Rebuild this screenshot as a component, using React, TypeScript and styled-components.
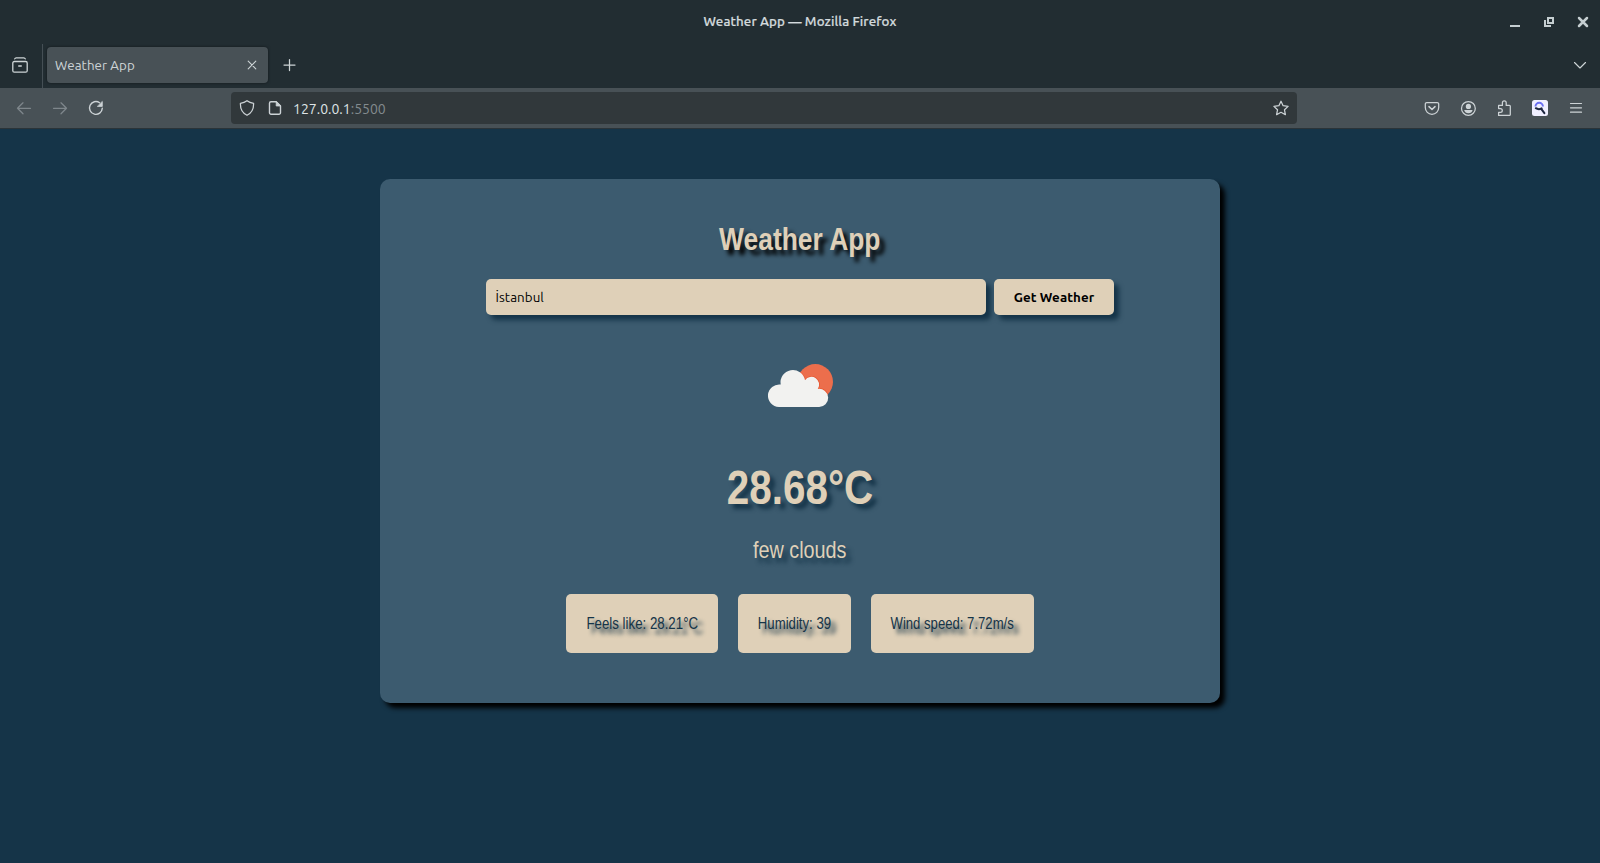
import React from "react";
import styled, { createGlobalStyle } from "styled-components";

const UI_FONT = `Ubuntu, "Noto Sans", sans-serif`;
const PAGE_FONT = `"Liberation Sans", Arial, sans-serif`;
const NAVY = "#153448";
const SLATE = "#3c5b6f";
const SAND = "#dfd0b8";

const GlobalStyle = createGlobalStyle`
  * { box-sizing: border-box; }
  body { margin: 0; background: ${NAVY}; overflow: hidden; }
  h1, h2, p { margin: 0; }
  button, input { font: inherit; color: inherit; border: 0; padding: 0; margin: 0; background: none; outline: 0; }
`;

const Window = styled.div`
  display: flex;
  flex-direction: column;
  width: 1600px;
  height: 863px;
  background: ${NAVY};
  font-family: ${UI_FONT};
`;

const TitleBar = styled.header`
  display: grid;
  grid-template-columns: 1fr auto 1fr;
  align-items: center;
  height: 43px;
  background: #222d32;
  color: #d3dadd;
`;

const WindowTitle = styled.span`
  grid-column: 2;
  font-size: 13.333px;
  line-height: 15px;
  padding-bottom: 1px;
  font-weight: 500;
  letter-spacing: 0.1px;
  -webkit-text-stroke: 0.2px currentColor;
  white-space: nowrap;
`;

const WindowControls = styled.div`
  display: flex;
  justify-content: flex-end;
  gap: 18px;
  padding-right: 9px;
  color: #c5ced1;
`;

const TabStrip = styled.div`
  display: flex;
  align-items: center;
  height: 45px;
  background: #222d32;
  color: #cdd4d6;
`;

const FirefoxView = styled.div`
  display: flex;
  align-items: center;
  width: 43px;
  height: 44px;
  padding: 0 0 1px 12px;
  border-right: 1px solid #454f55;
`;

const Tab = styled.div`
  display: flex;
  align-items: center;
  justify-content: space-between;
  width: 221px;
  height: 36px;
  margin: 0 14px 1px 4px;
  padding: 0 8px;
  border-radius: 4px;
  background: #485156;
  box-shadow: 0 0 3px rgba(0, 0, 0, 0.5);
`;

const TabTitle = styled.span`
  font-size: 13.333px;
  letter-spacing: 0.08px;
`;

const NewTab = styled.div`
  display: flex;
  margin-bottom: 1px;
`;

const TabListButton = styled.div`
  display: flex;
  margin: 0 12px 2px auto;
`;

const NavBar = styled.nav`
  display: flex;
  align-items: center;
  height: 41px;
  padding: 0 6px;
  background: #485156;
  border-bottom: 1px solid #2b3439;
  color: #cdd3d6;
`;

const NavGroup = styled.div<{ $end?: boolean }>`
  display: flex;
  margin-left: ${(p) => (p.$end ? "auto" : "0")};
`;

const ToolButton = styled.button<{ $dim?: boolean }>`
  display: flex;
  align-items: center;
  justify-content: center;
  width: 36px;
  height: 32px;
  color: ${(p) => (p.$dim ? "#7e868b" : "inherit")};
`;

const UrlBar = styled.div`
  display: flex;
  align-items: center;
  width: 1066px;
  height: 32px;
  margin-left: 117px;
  padding: 0 8px;
  border-radius: 4px;
  background: #31383b;
`;

const UrlText = styled.span`
  flex: 1;
  margin-left: 10px;
  padding-top: 2px;
  font-size: 14px;
  color: #dfe4e6;
`;

const Port = styled.span`
  color: #838b8e;
`;

const IconSlot = styled.span<{ $gap?: number }>`
  display: flex;
  margin-left: ${(p) => p.$gap ?? 0}px;
`;

const Page = styled.main`
  display: flex;
  justify-content: center;
  align-items: flex-start;
  flex: 1;
  padding-top: 50px;
  font-family: ${PAGE_FONT};
`;

const Card = styled.section`
  display: flex;
  flex-direction: column;
  align-items: center;
  width: 840px;
  height: 524px;
  padding-top: 42px;
  border-radius: 10px;
  background: ${SLATE};
  box-shadow: 5px 5px 5px #000;
`;

/* Condensed lettering: the regular face with its width narrowed. */
const Condensed = styled.span<{ $scale?: number }>`
  display: inline-block;
  white-space: nowrap;
  transform: scaleX(${(p) => p.$scale ?? 0.825});
`;

const Heading = styled.h1`
  font-size: 32px;
  line-height: 36px;
  color: ${SAND};
  text-shadow: 6px 5px 5px #000;
`;

const SearchForm = styled.form`
  display: flex;
  gap: 8px;
  margin-top: 22px;
  font-family: ${UI_FONT};
  font-size: 13.333px;
  color: #000;
`;

const CityInput = styled.input`
  width: 500px;
  height: 36px;
  padding: 0 9.5px;
  border-radius: 5px;
  background: ${SAND};
  box-shadow: 5px 5px 5px ${NAVY};
  letter-spacing: 0.08px;
`;

const SubmitButton = styled.button`
  width: 120px;
  height: 36px;
  border-radius: 5px;
  background: ${SAND};
  box-shadow: 5px 5px 5px ${NAVY};
  font-weight: 700;
  letter-spacing: 0.1px;
`;

const WeatherIcon = styled.svg`
  width: 100px;
  height: 100px;
  margin-top: 21px;
`;

const Temperature = styled.h2`
  margin-top: 25px;
  font-size: 48px;
  line-height: 54px;
  color: ${SAND};
  text-shadow: 6px 5px 5px ${NAVY};
`;

const Description = styled.p`
  margin-top: 21px;
  font-size: 24px;
  line-height: 27px;
  color: ${SAND};
  text-shadow: 6px 5px 5px ${NAVY};
`;

const Details = styled.div`
  display: flex;
  gap: 20px;
  margin-top: 31px;
`;

const Detail = styled.p<{ $width: number }>`
  display: flex;
  justify-content: center;
  width: ${(p) => p.$width}px;
  padding: 20px 0;
  border-radius: 5px;
  background: ${SAND};
  color: ${NAVY};
  font-size: 16px;
  line-height: 19px;
  text-shadow: 6px 5px 5px ${NAVY};
`;

const CLOUD =
  "M28.9 71A11.3 11.3 0 1 1 30.7 48.5A12.3 12.3 0 1 1 55 44.2A7.3 7.3 0 0 1 67.8 52.9A9.1 9.1 0 1 1 68.7 71Z";

type IconProps = { children: React.ReactNode; size?: number; sw?: number };
const Icon = ({ children, size = 16, sw = 1.25 }: IconProps) => (
  <svg width={size} height={size} viewBox={`0 0 ${size} ${size}`} fill="none" stroke="currentColor"
    strokeWidth={sw} strokeLinecap="round" strokeLinejoin="round">
    {children}
  </svg>
);

export default function App() {
  return (
    <>
      <GlobalStyle />
      <Window>
        <TitleBar>
          <WindowTitle>Weather App — Mozilla Firefox</WindowTitle>
          <WindowControls>
            <Icon><path d="M3 12h10" strokeWidth="2" strokeLinecap="butt" /></Icon>
            <Icon>
              <path d="M7 4h5v5H7z" strokeWidth="2" strokeLinejoin="miter" />
              <path d="M4 6v6h6" strokeWidth="2" strokeLinecap="butt" strokeLinejoin="miter" />
            </Icon>
            <Icon><path d="M4 4l8 8M12 4l-8 8" strokeWidth="2.5" /></Icon>
          </WindowControls>
        </TitleBar>

        <TabStrip>
          <FirefoxView>
            <Icon sw={1.3}>
              <path d="M2.7 1.9Q3.1.8 4.2.8h7.6q1.1 0 1.5 1.1" />
              <rect x=".8" y="4.5" width="14.4" height="10.7" rx="1.5" />
              <path d="M6.7 9h2.6" />
            </Icon>
          </FirefoxView>
          <Tab>
            <TabTitle>Weather App</TabTitle>
            <Icon sw={1.1}><path d="M4.2 4.2l7.6 7.6M11.8 4.2l-7.6 7.6" /></Icon>
          </Tab>
          <NewTab>
            <Icon><path d="M7.5 2.5v11M2 8h11" /></Icon>
          </NewTab>
          <TabListButton>
            <Icon sw={1.15}><path d="M2.5 5.5L8 11l5.500-5.500" /></Icon>
          </TabListButton>
        </TabStrip>

        <NavBar>
          <NavGroup>
            <ToolButton $dim><Icon><path d="M14.5 8.3h-13M7 2.8L1.5 8.3 7 13.8" /></Icon></ToolButton>
            <ToolButton $dim><Icon><path d="M1.5 8.3h13M9 2.8l5.5 5.5L9 13.8" /></Icon></ToolButton>
            <ToolButton>
              <Icon sw={1.4}>
                <path d="M11.6 2.7A6.4 6.4 0 1 0 14.3 8.3" />
                <path d="M14.3 1.8v4.6H9.7z" fill="currentColor" strokeWidth=".8" />
              </Icon>
            </ToolButton>
          </NavGroup>
          <UrlBar>
            <IconSlot>
              <Icon><path d="M8 .7c2 1.6 4.2 2.3 6.6 2.6.2 5.4-1.5 9.600-6.600 12C2.900 12.900 1.200 8.700 1.400 3.300 3.800 3 6 2.300 8 .7z" /></Icon>
            </IconSlot>
            <IconSlot $gap={12}>
              <Icon sw={1.4}>
                <path d="M9.2 1.7H4a1.5 1.5 0 0 0-1.5 1.5v9.6A1.5 1.5 0 0 0 4 14.3h8a1.5 1.5 0 0 0 1.5-1.5V6z" />
                <path d="M9.2 1.7V6h4.3z" fill="currentColor" strokeWidth=".8" />
              </Icon>
            </IconSlot>
            <UrlText>127.0.0.1<Port>:5500</Port></UrlText>
            <Icon>
              <path d="M8 1.2l2.1 4.5 5 .7-3.6 3.4.9 4.9L8 12.3l-4.4 2.4.9-4.9L.9 6.4l5-.7z" />
            </Icon>
          </UrlBar>
          <NavGroup $end>
            <ToolButton>
              <Icon>
                <path d="M2.8 2.500h10.400a1.500 1.500 0 0 1 1.500 1.500v3.600a6.700 6.700 0 0 1-13.400 0V4a1.500 1.500 0 0 1 1.500-1.500z" />
                <path d="M5 6.600l3 2.900 3-2.900" strokeWidth="1.500" />
              </Icon>
            </ToolButton>
            <ToolButton>
              <Icon>
                <circle cx="8.4" cy="8.4" r="6.900" />
                <circle cx="8.4" cy="6.4" r="2.600" fill="currentColor" stroke="none" />
                <path d="M4.200 9.900h8.400a4.500 4.500 0 0 1-4.200 3.300 4.500 4.500 0 0 1-4.200-3.300z" fill="currentColor" stroke="none" />
              </Icon>
            </ToolButton>
            <ToolButton>
              <Icon>
                <path d="M2.600 5.400h3.800V2.700a1.900 1.900 0 0 1 3.800 0v2.700h3.300a.8.8 0 0 1 .8.8v8.400a.8.8 0 0 1-.8.8H2.600v-3h1.800a1.900 1.900 0 0 0 0-3.800H2.600z" />
              </Icon>
            </ToolButton>
            <ToolButton>
              <Icon>
                <rect width="16" height="16" rx="2.5" fill="#f0efff" stroke="none" />
                <path d="M3.5 6.500A3.700 3.700 0 0 1 10.900 6.500" stroke="#6b70f2" strokeWidth="2" strokeLinecap="butt" />
                <path d="M3.800 8.200Q6.600 10 9.600 8.400" stroke="#1d2640" strokeWidth="2" />
                <path d="M9.400 9.200l3 4" stroke="#1d2640" strokeWidth="2" />
              </Icon>
            </ToolButton>
            <ToolButton>
              <Icon sw={1.2}><path d="M2.500 3.500h11M2.500 7.800h11M2.500 12.200h11" /></Icon>
            </ToolButton>
          </NavGroup>
        </NavBar>

        <Page>
          <Card>
            <Heading><Condensed>Weather App</Condensed></Heading>
            <SearchForm>
              <CityInput defaultValue="İstanbul" />
              <SubmitButton type="button">Get Weather</SubmitButton>
            </SearchForm>
            <WeatherIcon viewBox="0 0 100 100">
              <defs>
                <clipPath id="sunDisc"><circle cx="65.3" cy="45.8" r="17.7" /></clipPath>
              </defs>
              <circle cx="65.3" cy="45.8" r="17.7" fill="#ec6e4c" />
              <path d={CLOUD} fill="none" stroke="#e65a34" strokeWidth="1.4" clipPath="url(#sunDisc)" />
              <path d={CLOUD} fill="#f2f2f0" />
            </WeatherIcon>
            <Temperature><Condensed $scale={0.842}>28.68°C</Condensed></Temperature>
            <Description><Condensed>few clouds</Condensed></Description>
            <Details>
              <Detail $width={152}><Condensed $scale={0.83}>Feels like: 28.21°C</Condensed></Detail>
              <Detail $width={113}><Condensed>Humidity: 39</Condensed></Detail>
              <Detail $width={163}><Condensed $scale={0.82}>Wind speed: 7.72m/s</Condensed></Detail>
            </Details>
          </Card>
        </Page>
      </Window>
    </>
  );
}
